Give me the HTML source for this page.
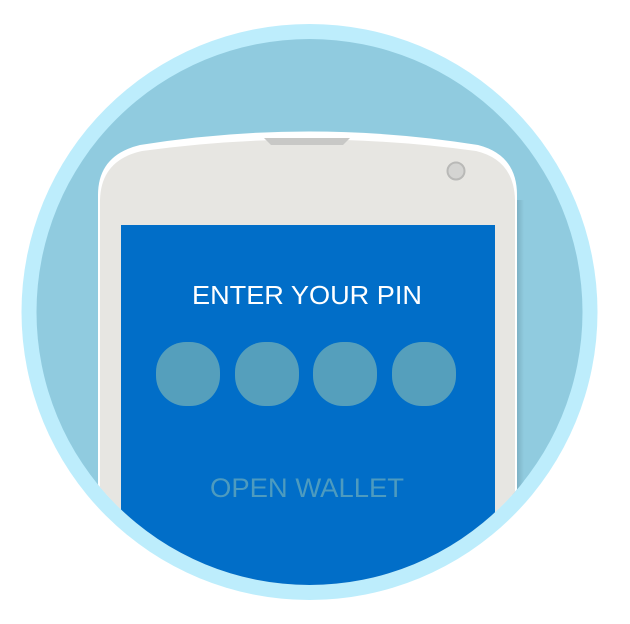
<!DOCTYPE html>
<html><head><style>
html,body{margin:0;padding:0;background:#fff;width:630px;height:624px;overflow:hidden}
</style></head><body>
<svg width="630" height="624" viewBox="0 0 630 624" xmlns="http://www.w3.org/2000/svg">
<defs>
<clipPath id="c"><circle cx="309.5" cy="312" r="273"/></clipPath>
<linearGradient id="s" x1="0" x2="1"><stop offset="0" stop-color="#6f9eb0"/><stop offset="1" stop-color="#90cbdf"/></linearGradient>
</defs>
<circle cx="309.5" cy="312" r="288" fill="#bdedfc"/>
<circle cx="309.5" cy="312" r="273" fill="#90cbdf"/>
<g clip-path="url(#c)">
<rect x="512" y="200" width="12" height="440" fill="url(#s)"/>
<path d="M98 195 Q98 155 140 145 Q309 118 478 145 Q517 155 517 195 L517 624 L98 624 Z" fill="#ffffff"/>
<path d="M100 200 Q101 160 142 151 Q309 128 476 151 Q514 160 515 200 L515 624 L100 624 Z" fill="#e7e6e2"/>
<path d="M264 138 L350 138 L343 145 L271 145 Z" fill="#c8c8c6"/>
<circle cx="456" cy="171" r="8.5" fill="#d4d4d2" stroke="#b9b9b7" stroke-width="2"/>
<rect x="121" y="225" width="374" height="400" fill="#016ec8"/>
<text x="192" y="304" textLength="230" lengthAdjust="spacingAndGlyphs" font-family="Liberation Sans, sans-serif" font-size="26" fill="#fff">ENTER YOUR PIN</text>
<rect x="156" y="342" width="64" height="64" rx="30" fill="#559fbc"/>
<rect x="235" y="342" width="64" height="64" rx="30" fill="#559fbc"/>
<rect x="313" y="342" width="64" height="64" rx="30" fill="#559fbc"/>
<rect x="392" y="342" width="64" height="64" rx="30" fill="#559fbc"/>
<text x="210" y="497" textLength="194" lengthAdjust="spacingAndGlyphs" font-family="Liberation Sans, sans-serif" font-size="27" fill="#4d9bbf">OPEN WALLET</text>
</g>
</svg>
</body></html>
